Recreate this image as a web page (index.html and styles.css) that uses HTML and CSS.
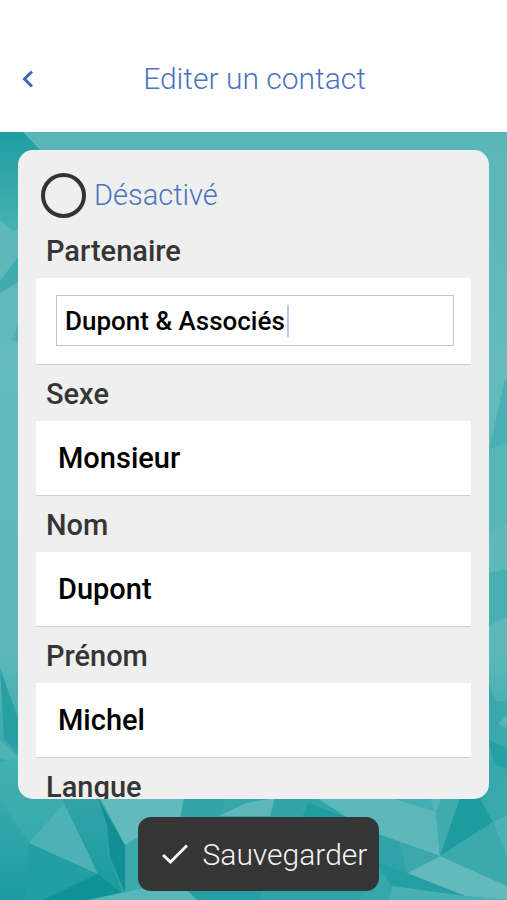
FILE: index.html
```html
<!DOCTYPE html>
<html lang="fr">
<head>
<meta charset="utf-8">
<meta name="viewport" content="width=device-width, initial-scale=1">
<title>Editer un contact</title>
<link rel="stylesheet" href="styles.css">
</head>
<body>
<header class="topbar">
  <button class="back" type="button" aria-label="Retour">
    <svg viewBox="0 0 12 18" width="12" height="18" aria-hidden="true"><path d="M10 1.500 2.500 9l7.500 7.500" fill="none" stroke="currentColor" stroke-width="3"/></svg>
  </button>
  <h1 class="title">Editer un contact</h1>
</header>
<main class="stage">
  <svg class="backdrop" viewBox="0 132 507 768" preserveAspectRatio="none" aria-hidden="true">
    <defs>
      <linearGradient id="base" x1="0" y1="0" x2="0" y2="1">
        <stop offset="0" stop-color="#5ab7b9"/><stop offset=".3" stop-color="#64babd"/>
        <stop offset=".68" stop-color="#5cb8ba"/><stop offset=".8" stop-color="#3aa8ac"/><stop offset="1" stop-color="#2ea4a8"/>
      </linearGradient>
      <linearGradient id="corner" x1="0" y1="0" x2="0" y2="1">
        <stop offset="0" stop-color="#209da1"/><stop offset="1" stop-color="#48b1b3"/>
      </linearGradient>
      <linearGradient id="deep" x1="0" y1="0" x2="0" y2="1">
        <stop offset="0" stop-color="#42afb2"/><stop offset="1" stop-color="#1c9ca0"/>
      </linearGradient>
      <linearGradient id="shade" x1="0" y1="0" x2="0" y2="1">
        <stop offset="0" stop-color="#31a4a8"/><stop offset="1" stop-color="#1b9b9f"/>
      </linearGradient>
    </defs>
    <path fill="url(#base)" d="M0 132h507v768H0z"/>
    <path fill="url(#corner)" d="M0 132h23l17 18v80L14 232 0 220z"/>
    <path fill="#5cb8ba" d="M0 220l13 12 7-4v34l-8 8L0 285z"/>
    <path fill="#3fadaf" d="M20 254v27L0 293v-12z"/>
    <path fill="#4cb2b5" d="M20 320v22l-9-2z"/>
    <path fill="#49b0b3" d="M505 380l-16 70 18-8v-62z"/>
    <path fill="#58b6b8" d="M489 450l18-8v82l-18 10z"/>
    <path fill="#48b0b3" d="M489 573l18-4v48l-18 9z"/>
    <path fill="#3aa8ac" d="M489 684l7 17h11v68l-18-10z"/>
    <path fill="#55b5b7" d="M507 715l-9 9 9 4z"/>
    <path fill="#269fa3" d="M489 740l18 8v21l-13-5z"/>
    <path fill="#279fa3" d="M0 668l18 50v34L4 739z"/>
    <path fill="#4eb3b5" d="M0 740l20 18v7L0 758z"/>
    <path fill="url(#deep)" d="M0 762l18-4 46 40v45l-35 0 2 57H0z"/>
    <path fill="#44afb2" d="M18 762l46 36v5l-35 40L0 800v-38z" opacity=".5"/>
    <path fill="#219fa3" d="M29 843l69 31-56 26H25z"/>
    <path fill="#4db2b5" d="M64 798v5l-35 40 69 31z"/>
    <path fill="url(#shade)" d="M62 798h38l8 24v30l14 41-24-19-34-71z"/>
    <path fill="#128f94" d="M98 798l27 47v48l-15-36-3-32z"/>
    <path fill="#62babd" d="M100 798h98l-12 18-61 29z"/>
    <path fill="#3aa9ac" d="M125 845l15-9v54l-15 3z"/>
    <path fill="#0f9297" d="M98 874l24 19-32 7H42z"/>
    <path fill="#58b7b9" d="M88 900l37-8 20-4 42 2 10 10z"/>
    <path fill="#259fa3" d="M187 890h75v10h-65z"/>
    <path fill="#33a5a9" d="M184 798h40l-4 20h-40z"/>
    <path fill="#5cb8ba" d="M219 816l27-13 29-5-5 18z"/>
    <path fill="#31a5a8" d="M275 798h42l32 20h-79z"/>
    <path fill="#1f9da1" d="M308 803l40 15h-46z"/>
    <path fill="#5cb8bb" d="M317 798h113l6 14 4 44-62-22-30-16z"/>
    <path fill="#43aeb1" d="M395 799l35 0 6 13z"/>
    <path fill="#56b6b8" d="M430 798h12l-6 14z"/>
    <path fill="#41abad" d="M436 812l8-14h16l-20 58z"/>
    <path fill="#1d9ca0" d="M460 798h20l13 24-53 34z"/>
    <path fill="#38a8ab" d="M480 798l27-24v41l-14 7z"/>
    <path fill="#4db1b3" d="M493 822l14-7v43z"/>
    <path fill="#3ca9ac" d="M440 856l53-34 14 34v30z"/>
    <path fill="#62babd" d="M440 856l67 30v14l-42-4-58-23z"/>
    <path fill="#2fa4a8" d="M378 834l22 10 8 29-30-9z"/>
    <path fill="#3da8ab" d="M400 844l40 12-33 17z"/>
    <path fill="#259fa3" d="M376 862l31 11 58 23-73-10z"/>
    <path fill="#48b0b2" d="M392 886l73 10 42 4H388z"/>
    <path fill="#36a7aa" d="M376 866l16 20-3 14H360l5-10z"/>
  </svg>
  <form class="card" id="contact">
    <div class="toggle">
      <input class="toggle-box" type="checkbox" id="actif">
      <label class="toggle-label" for="actif">Désactivé</label>
    </div>
    <label class="label" for="partenaire">Partenaire</label>
    <div class="field field-boxed">
      <input class="boxed" id="partenaire" type="text" value="Dupont &amp; Associés">
      <span class="caret"></span>
    </div>
    <label class="label" for="sexe">Sexe</label>
    <select class="field value" id="sexe"><option>Monsieur</option><option>Madame</option></select>
    <label class="label" for="nom">Nom</label>
    <input class="field value" id="nom" type="text" value="Dupont">
    <label class="label" for="prenom">Prénom</label>
    <input class="field value" id="prenom" type="text" value="Michel">
    <label class="label" for="langue">Langue</label>
    <select class="field value" id="langue"><option>Français</option></select>
  </form>
  <button class="save" type="submit" form="contact">
    <svg viewBox="0 0 26 20" width="26" height="20" aria-hidden="true"><path d="M1 11l7.500 7L25 1.500" fill="none" stroke="currentColor" stroke-width="3"/></svg>
    Sauvegarder
  </button>
</main>
</body>
</html>
```
FILE: styles.css
```css
* {
  box-sizing: border-box;
}

body {
  margin: 0;
  height: 100vh;
  display: flex;
  flex-direction: column;
  font-family: Roboto, sans-serif;
  background: #fff;
}

button,
input,
select {
  font-family: inherit;
  margin: 0;
}

.topbar {
  flex: none;
  display: grid;
  grid-template-columns: 56px 1fr 54px;
  align-items: center;
  height: 132px;
  padding-top: 26px;
  color: #4a74bd;
}

.back {
  display: flex;
  justify-content: center;
  padding: 12px 0;
  border: 0;
  background: none;
  color: #3a68b5;
}

.title {
  margin: 0;
  text-align: center;
  font-size: 30px;
  font-weight: 300;
  line-height: 36px;
}

.stage {
  position: relative;
  flex: 1;
  min-height: 0;
  display: flex;
  flex-direction: column;
  align-items: center;
  padding: 18px 18px 9px;
}

.backdrop {
  position: absolute;
  inset: 0;
  width: 100%;
  height: 100%;
}

.card {
  position: relative;
  flex: 1;
  min-height: 0;
  width: 100%;
  padding: 18px 18px 0;
  overflow: hidden;
  border-radius: 15px;
  background: #efefef;
}

.toggle {
  display: flex;
  align-items: center;
  gap: 8px;
  height: 54px;
  padding-left: 5px;
}

.toggle-box {
  appearance: none;
  width: 45px;
  height: 45px;
  border: 4px solid #333;
  border-radius: 50%;
}

.toggle-label {
  color: #4a74bd;
  font-size: 29px;
  font-weight: 300;
}

.label {
  display: block;
  padding: 2px 10px 0;
  color: #353535;
  font-size: 29px;
  font-weight: 500;
  line-height: 54px;
}

.field {
  display: block;
  width: 100%;
  border: 0;
  border-bottom: 1px solid #cfcfcf;
  border-radius: 1px;
  background: #fff;
  color: #000;
}

.value {
  appearance: none;
  height: 75px;
  padding: 0 22px;
  font-size: 29px;
  font-weight: 500;
}

.field-boxed {
  position: relative;
  padding: 17px 17px 18px 20px;
}

.boxed {
  display: block;
  width: 100%;
  height: 51px;
  padding: 0 8px;
  border: 1px solid #c4c4c4;
  background: #fff;
  color: #000;
  font-size: 26px;
  font-weight: 500;
}

.caret {
  position: absolute;
  left: 251px;
  top: 27px;
  width: 2px;
  height: 32px;
  background: #b3caf3;
}

.save {
  position: relative;
  flex: none;
  display: flex;
  align-items: center;
  gap: 15px;
  height: 74px;
  margin: 18px 0 0 10px;
  padding: 0 12px 0 24px;
  border: 0;
  border-radius: 13px;
  background: #353535;
  color: #f4f4f4;
  font-size: 30px;
  font-weight: 300;
}
```
